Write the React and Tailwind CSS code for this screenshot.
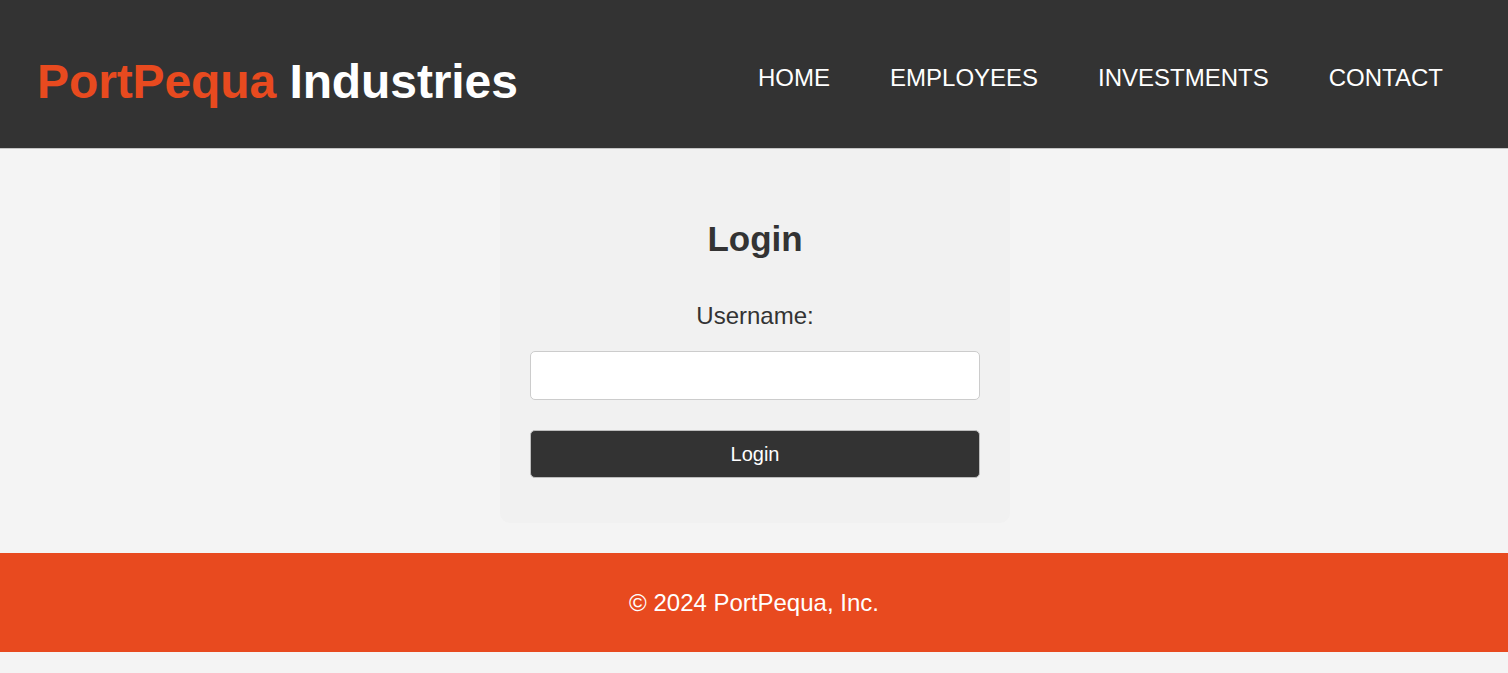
export default function App() {
  const links = ['HOME', 'EMPLOYEES', 'INVESTMENTS', 'CONTACT'];

  return (
    <div className="min-h-screen bg-[#f4f4f4] font-['Liberation_Sans',Arial,sans-serif] text-[#333]">
      <header className="flex h-[149px] items-center justify-between border-b border-[#c4c4c4] bg-[#333333] pl-[37px] pr-[65px] pt-[8px]">
        <h1 className="mt-[7px] text-[48px] font-bold leading-[55px] tracking-[-0.1px]">
          <span className="text-[#e84a1f]">PortPequa</span> <span className="text-white">Industries</span>
        </h1>
        <nav className="flex items-center gap-[60px]">
          {links.map((link) => (
            <a key={link} href="#" className="text-[24px] leading-[28px] text-white">
              {link}
            </a>
          ))}
        </nav>
      </header>

      <main className="flex justify-center pl-[2px]">
        <div className="w-[510px] rounded-b-[10px] bg-[#f1f1f1] px-[30px] pb-[45px] pt-[70px]">
          <h2 className="text-center text-[35px] font-bold leading-[40px]">Login</h2>
          <form className="mt-[43px] flex flex-col">
            <label htmlFor="username" className="text-center text-[24px] leading-[28px]">
              Username:
            </label>
            <input
              id="username"
              type="text"
              className="mt-[21px] h-[49px] w-full rounded-[5px] border border-[#cccccc] bg-white px-3 outline-none"
            />
            <button
              type="button"
              className="mt-[30px] h-[48px] w-full rounded-[5px] border border-[#bdbdbd] bg-[#333333] text-[20px] text-white"
            >
              Login
            </button>
          </form>
        </div>
      </main>

      <footer className="mt-[30px] flex h-[99px] items-center justify-center bg-[#e84a1f]">
        <p className="text-[24px] text-white">© 2024 PortPequa, Inc.</p>
      </footer>
    </div>
  );
}
